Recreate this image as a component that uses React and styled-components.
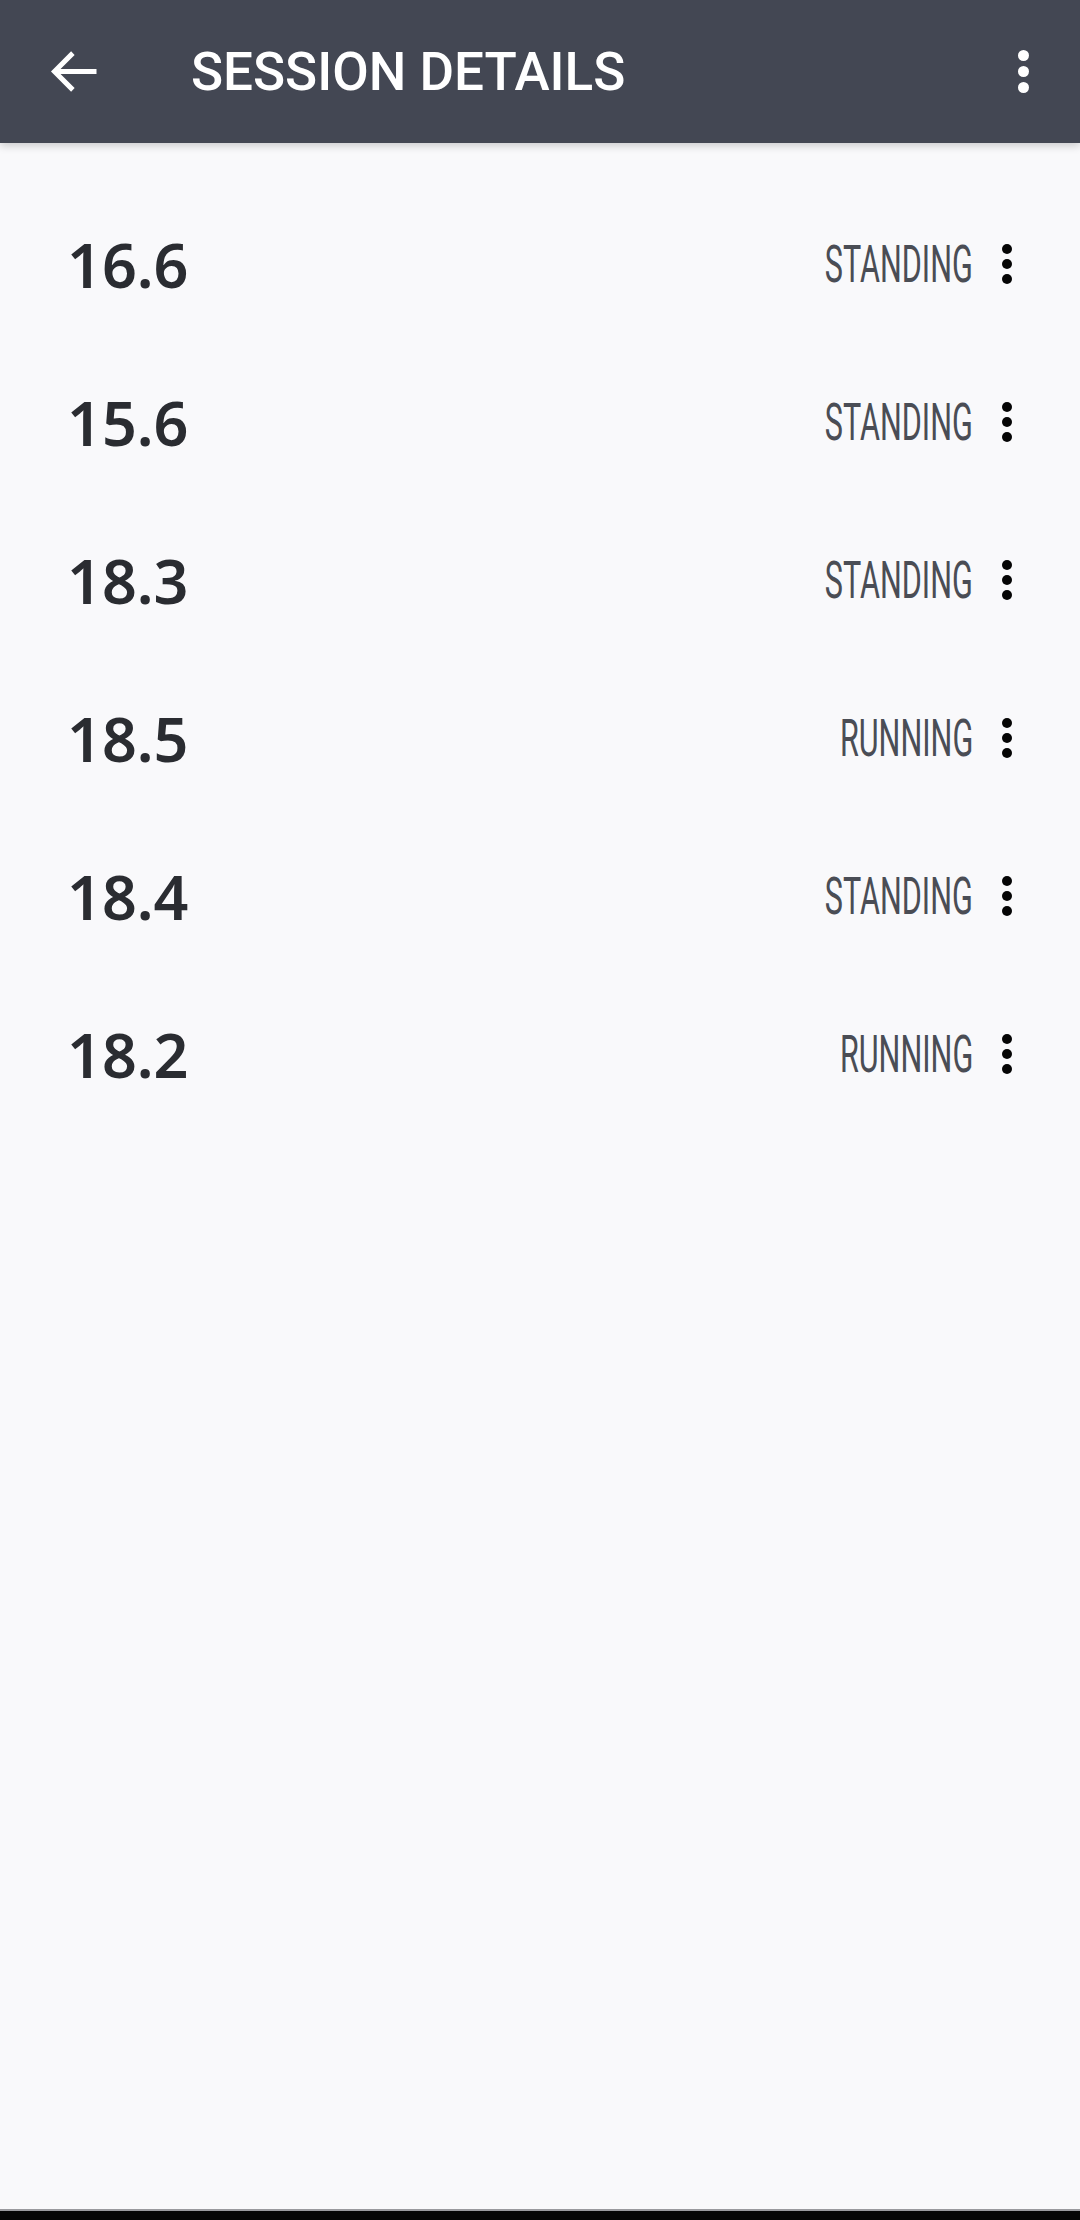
import React from 'react';
import styled, { createGlobalStyle } from 'styled-components';

const GlobalStyle = createGlobalStyle`
  html, body {
    margin: 0;
    padding: 0;
    background: #f9f9fb;
  }
  body {
    font-family: Roboto, "Noto Sans", sans-serif;
  }
`;

const Screen = styled.div`
  width: 1080px;
  height: 2220px;
  display: flex;
  flex-direction: column;
  background: #f9f9fb;
  overflow: hidden;
`;

const Toolbar = styled.header`
  height: 143px;
  flex: none;
  display: flex;
  align-items: center;
  padding: 0 15px 0 33px;
  background: #434753;
  box-shadow: 0 3px 8px rgba(0, 0, 0, 0.18);
  position: relative;
  z-index: 1;
`;

const IconButton = styled.button`
  width: ${(p) => p.$width || 84}px;
  height: 84px;
  display: flex;
  align-items: center;
  justify-content: center;
  background: transparent;
  border: none;
  padding: 0;
  color: ${(p) => p.color || '#fff'};
`;

const Title = styled.h1`
  flex: 1;
  margin: 0 0 0 74px;
  font-family: Roboto, sans-serif;
  font-weight: 500;
  font-size: 53px;
  color: #ffffff;
`;

const List = styled.main`
  flex: 1;
  display: flex;
  flex-direction: column;
  padding: 42px 0 0 0;
`;

const Row = styled.div`
  height: 158px;
  display: flex;
  align-items: center;
  justify-content: space-between;
  padding: 0 53px 0 67px;
`;

const Value = styled.span`
  font-family: "Noto Sans", sans-serif;
  font-weight: 600;
  font-size: 61px;
  color: #2a2c31;
`;

const Right = styled.div`
  display: flex;
  align-items: center;
`;

const Status = styled.span`
  display: inline-block;
  font-family: Roboto, sans-serif;
  font-weight: 400;
  font-size: 51px;
  color: #4a4d55;
  transform: scaleX(0.6);
  transform-origin: right center;
  margin-right: 14px;
`;

const BottomBar = styled.div`
  height: 9px;
  flex: none;
  background: #050505;
  border-top: 2px solid #9a9a9e;
`;

const BackArrow = () => (
  <svg width="63" height="63" viewBox="0 0 24 24">
    <path d="M20 12H4.5M11 5l-7 7 7 7" fill="none" stroke="currentColor" strokeWidth="1.9" />
  </svg>
);

const Dots = ({ size = 11, gap = 5 }) => (
  <svg width={size} height={size * 3 + gap * 2} viewBox={`0 0 ${size} ${size * 3 + gap * 2}`}>
    <circle cx={size / 2} cy={size / 2} r={size / 2} fill="currentColor" />
    <circle cx={size / 2} cy={size * 1.5 + gap} r={size / 2} fill="currentColor" />
    <circle cx={size / 2} cy={size * 2.5 + gap * 2} r={size / 2} fill="currentColor" />
  </svg>
);

const sessions = [
  { value: '16.6', status: 'STANDING' },
  { value: '15.6', status: 'STANDING' },
  { value: '18.3', status: 'STANDING' },
  { value: '18.5', status: 'RUNNING' },
  { value: '18.4', status: 'STANDING' },
  { value: '18.2', status: 'RUNNING' },
];

const App = () => {
  return (
    <Screen>
      <GlobalStyle />
      <Toolbar>
        <IconButton aria-label="back">
          <BackArrow />
        </IconButton>
        <Title>SESSION DETAILS</Title>
        <IconButton aria-label="more">
          <Dots size={11} gap={5} />
        </IconButton>
      </Toolbar>
      <List>
        {sessions.map((s, i) => (
          <Row key={i}>
            <Value>{s.value}</Value>
            <Right>
              <Status>{s.status}</Status>
              <IconButton $width={40} color="#050505" aria-label="options">
                <Dots size={10} gap={5} />
              </IconButton>
            </Right>
          </Row>
        ))}
      </List>
      <BottomBar />
    </Screen>
  );
};

export default App;
